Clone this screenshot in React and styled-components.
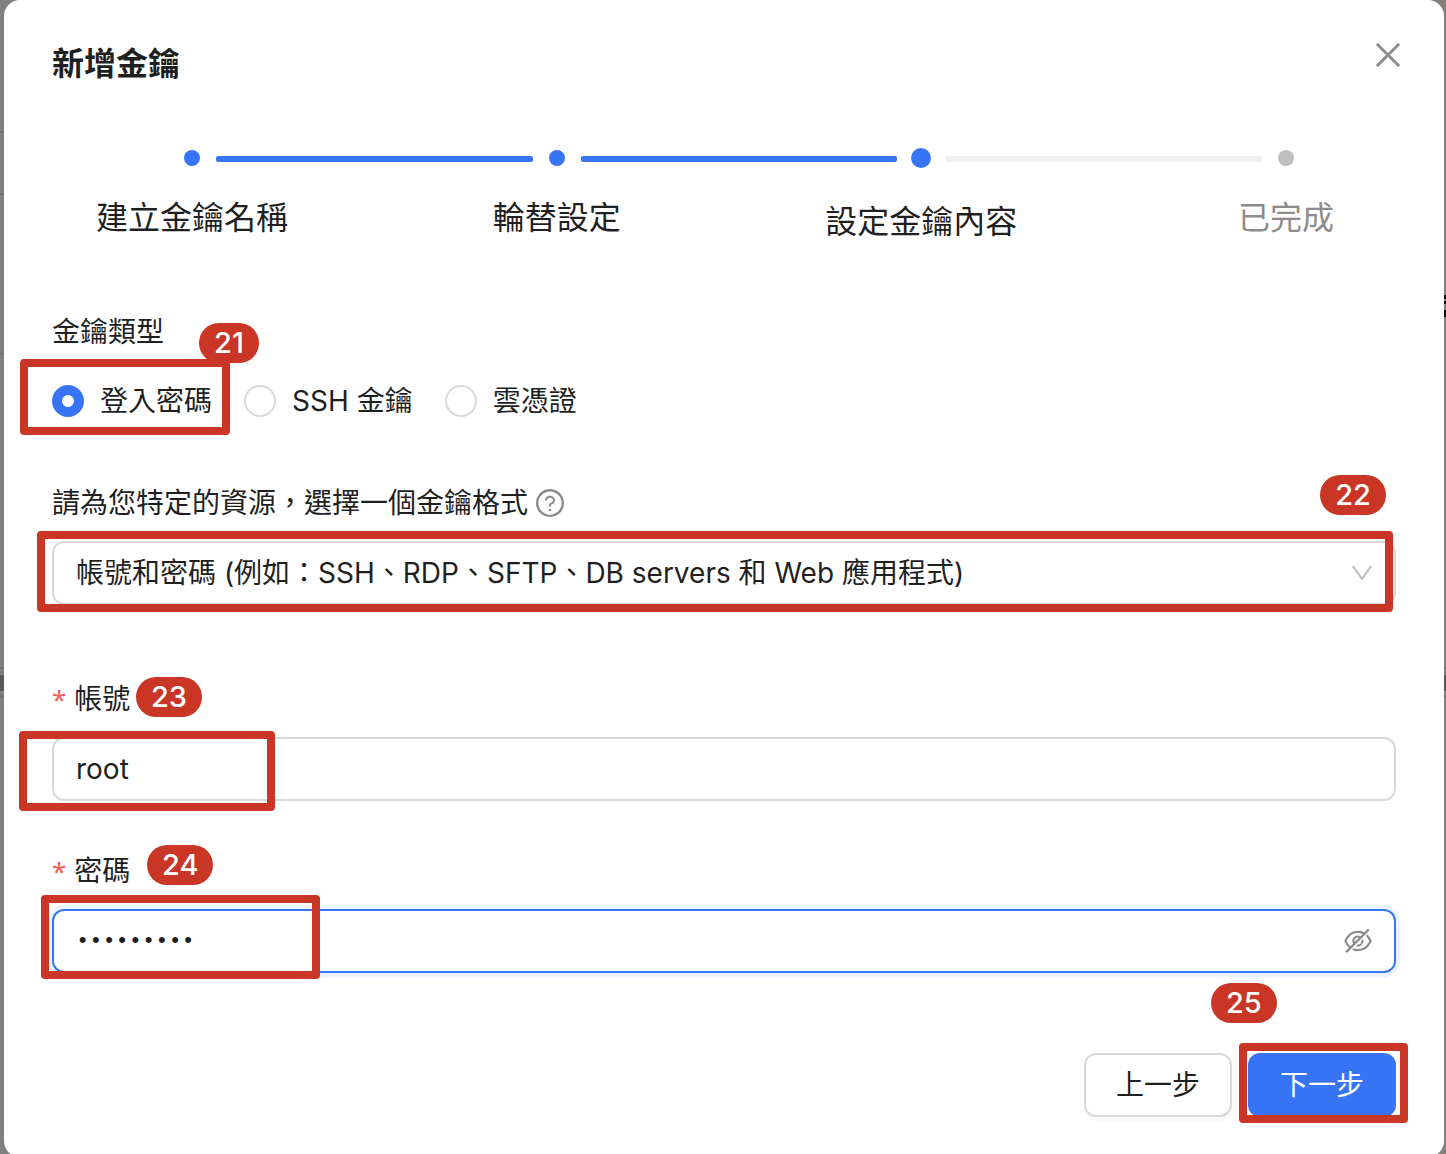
import React, { useState } from 'react'
import styled, { createGlobalStyle } from 'styled-components'
import {
  AiOutlineClose,
  AiOutlineDown,
  AiOutlineEyeInvisible,
  AiOutlineQuestionCircle
} from 'react-icons/ai'

const blue = '#3875f6'
const red = '#c93625'
const ink = '#1f1f1f'
const gray = '#8c8c8c'
const border = '#d9d9d9'
const fontStack = `Inter, 'Noto Sans CJK TC', sans-serif`

const GlobalStyle = createGlobalStyle`
  *, *::before, *::after {
    box-sizing: border-box;
  }

  body {
    margin: 0;
    color: ${ink};
    font-family: ${fontStack};
    font-size: 28px;
    line-height: 44px;
  }

  button, input, select {
    margin: 0;
    color: inherit;
    font: inherit;
  }
`

/* dimmed page, with the edges of its table rows and text still showing */
const Backdrop = styled.div`
  height: 100vh;
  padding: 0 2px 0 4px;
  overflow-y: auto;
  scrollbar-width: none;
  background:
    linear-gradient(#757472, #757472) 0 131px / 4px 2px no-repeat,
    linear-gradient(#757472, #757472) 0 193px / 4px 2px no-repeat,
    linear-gradient(#787776, #787776) 0 353px / 4px 2px no-repeat,
    linear-gradient(#757472, #757472) 0 667px / 100% 2px no-repeat,
    linear-gradient(#5a5958, #5a5958) 0 675px / 100% 16px no-repeat,
    linear-gradient(#757472, #757472) 0 695px / 100% 2px no-repeat,
    linear-gradient(#111, #111) 100% 295px / 2px 4px no-repeat,
    linear-gradient(#111, #111) 100% 301px / 2px 3px no-repeat,
    linear-gradient(#111, #111) 100% 310px / 2px 7px no-repeat,
    #82807f;
`

const Modal = styled.main`
  position: relative;
  padding: 40px 48px;
  border-radius: 16px;
  background: #fff;
`

const Title = styled.h1`
  margin: 0;
  font-size: 32px;
  font-weight: 700;
  line-height: 48px;
`

const CloseButton = styled.button`
  position: absolute;
  top: 31px;
  right: 32px;
  display: flex;
  align-items: center;
  justify-content: center;
  width: 48px;
  height: 48px;
  padding: 0;
  border: 0;
  background: none;
  color: ${gray};
  cursor: pointer;
`

const Steps = styled.ol`
  display: grid;
  grid-template-columns: 1fr 1fr 1fr 250px;
  margin: 58px 0 0;
  padding: 0;
  list-style: none;
`

const Rail = styled.div`
  display: flex;
  align-items: center;
  gap: 14px;
  height: 24px;
  margin: 0 -116px 0 130px;
`

const DotBox = styled.span`
  display: flex;
  flex: none;
  align-items: center;
  justify-content: center;
  width: 20px;
`

const Dot = styled.span`
  width: ${p => (p.$state === 'active' ? 20 : 16)}px;
  height: ${p => (p.$state === 'active' ? 20 : 16)}px;
  border-radius: 50%;
  background: ${p => (p.$state === 'wait' ? '#bfbfbf' : blue)};
`

const Tail = styled.span`
  flex: 1;
  height: 6px;
  margin-top: 2px;
  border-radius: 2px;
  background: ${p => (p.$done ? blue : '#f0f0f0')};
`

const StepName = styled.div`
  width: 280px;
  margin-top: ${p => (p.$state === 'active' ? 28 : 24)}px;
  color: ${p => (p.$state === 'wait' ? gray : ink)};
  font-size: 32px;
  line-height: 48px;
  text-align: center;
`

const Form = styled.form`
  display: flex;
  flex-direction: column;
  margin-top: 64px;
`

const RadioGroup = styled.fieldset`
  min-width: 0;
  margin: 0;
  padding: 0;
  border: 0;
`

const Legend = styled.legend`
  padding: 0;
`

const RadioRow = styled.div`
  position: relative;
  display: flex;
  gap: 32px;
  margin-top: 25px;
`

const RadioLabel = styled.label`
  display: flex;
  align-items: center;
  gap: 16px;
  cursor: pointer;
`

const Radio = styled.input`
  width: 32px;
  height: 32px;
  border: 2px solid ${border};
  border-radius: 50%;
  background: #fff;
  appearance: none;

  &:checked {
    border: 10px solid ${blue};
  }
`

const Field = styled.div`
  display: flex;
  flex-direction: column;
  gap: 16px;
  margin-top: ${p => p.$space}px;
`

const LabelRow = styled.div`
  display: flex;
  align-items: center;
  gap: 6px;
  color: ${gray};

  label {
    color: ${ink};
  }
`

const Required = styled.span`
  margin-right: 8px;
  color: #f25c57;
  font-family: 'Noto Sans', sans-serif;
  font-size: 26px;
  line-height: 1;
`

const Control = styled.div`
  position: relative;
  display: flex;
  align-items: center;
`

const Input = styled.input`
  width: 100%;
  height: 64px;
  padding: 0 22px;
  border: 2px solid ${p => (p.$active ? blue : border)};
  border-radius: 12px;
  outline: 0;
  background: #fff;
  box-shadow: ${p => (p.$active ? '0 0 0 4px #eaf3ff' : 'none')};

  &[type='password'] {
    font-family: 'Liberation Mono', monospace;
    font-size: 22px;
  }
`

const Select = styled.select`
  width: 100%;
  height: 64px;
  padding: 0 60px 0 22px;
  border: 2px solid ${border};
  border-radius: 12px;
  background: #fff;
  appearance: none;
`

const Arrow = styled(AiOutlineDown)`
  position: absolute;
  right: 20px;
  color: #bfbfbf;
  pointer-events: none;
`

const EyeButton = styled.button`
  position: absolute;
  right: 22px;
  display: flex;
  padding: 0;
  border: 0;
  background: none;
  color: ${gray};
`

const Footer = styled.footer`
  display: flex;
  justify-content: flex-end;
  gap: 16px;
  margin-top: 80px;
`

const ButtonSlot = styled.div`
  position: relative;
`

const Button = styled.button`
  height: 64px;
  padding: 0 30px;
  border: 2px solid ${p => (p.$primary ? blue : border)};
  border-radius: 12px;
  background: ${p => (p.$primary ? blue : '#fff')};
  box-shadow: ${p => (p.$primary ? 'none' : '0 4px 0 #fafafa')};
  color: ${p => (p.$primary ? '#fff' : ink)};
  cursor: pointer;
`

/* tutorial callouts: a red frame and a numbered pill laid over a control */
const Frame = styled.div`
  position: absolute;
  top: ${p => p.$top}px;
  bottom: ${p => p.$bottom}px;
  left: ${p => p.$left}px;
  right: ${p => (p.$width ? 'auto' : `${p.$right}px`)};
  width: ${p => (p.$width ? `${p.$width}px` : 'auto')};
  border: 8px solid ${red};
  border-radius: 4px;
  pointer-events: none;
`

const Badge = styled.span`
  position: absolute;
  top: ${p => p.$top}px;
  left: ${p => (p.$right === undefined ? `${p.$left}px` : 'auto')};
  right: ${p => (p.$right === undefined ? 'auto' : `${p.$right}px`)};
  min-width: 60px;
  height: 40px;
  padding: 0 15px;
  border-radius: 20px;
  background: ${red};
  color: #fff;
  font-size: 29px;
  font-weight: 500;
  line-height: 40px;
  text-align: center;
`

const steps = [
  { name: '建立金鑰名稱', state: 'done' },
  { name: '輪替設定', state: 'done' },
  { name: '設定金鑰內容', state: 'active' },
  { name: '已完成', state: 'wait' }
]

const types = [
  { id: 'password', name: '登入密碼' },
  { id: 'ssh', name: 'SSH 金鑰' },
  { id: 'cloud', name: '雲憑證' }
]

const Step = ({ name, state, last }) => (
  <li>
    <Rail>
      <DotBox><Dot $state={state} /></DotBox>
      {!last && <Tail $done={state === 'done'} />}
    </Rail>
    <StepName $state={state}>{name}</StepName>
  </li>
)

const App = () => {
  const [type, setType] = useState('password')

  return (
    <Backdrop lang='zh-Hant'>
      <GlobalStyle />
      <Modal>
        <Title>新增金鑰</Title>
        <CloseButton type='button' aria-label='關閉'>
          <AiOutlineClose size={36} />
        </CloseButton>

        <Steps>
          {steps.map((step, i) => (
            <Step key={step.name} {...step} last={i === steps.length - 1} />
          ))}
        </Steps>

        <Form onSubmit={e => e.preventDefault()}>
          <RadioGroup>
            <Legend>金鑰類型</Legend>
            <RadioRow>
              {types.map(({ id, name }) => (
                <RadioLabel key={id}>
                  <Radio
                    type='radio'
                    name='type'
                    checked={type === id}
                    onChange={() => setType(id)}
                  />
                  {name}
                </RadioLabel>
              ))}
              <Frame $top={-20} $bottom={-12} $left={-32} $width={210} />
              <Badge $top={-56} $left={147}>21</Badge>
            </RadioRow>
          </RadioGroup>

          <Field $space={58}>
            <LabelRow>
              <label htmlFor='format'>請為您特定的資源，選擇一個金鑰格式</label>
              <AiOutlineQuestionCircle size={32} />
            </LabelRow>
            <Control>
              <Select id='format'>
                <option>帳號和密碼 (例如：SSH、RDP、SFTP、DB servers 和 Web 應用程式)</option>
              </Select>
              <Arrow size={28} />
              <Frame $top={-10} $bottom={-7} $left={-15} $right={3} />
              <Badge $top={-66} $right={10}>22</Badge>
            </Control>
          </Field>

          <Field $space={72}>
            <LabelRow>
              <label htmlFor='account'><Required>*</Required>帳號</label>
            </LabelRow>
            <Control>
              <Input id='account' type='text' defaultValue='root' />
              <Frame $top={-6} $bottom={-10} $left={-33} $width={256} />
              <Badge $top={-60} $left={84}>23</Badge>
            </Control>
          </Field>

          <Field $space={48}>
            <LabelRow>
              <label htmlFor='password'><Required>*</Required>密碼</label>
            </LabelRow>
            <Control>
              <Input id='password' type='password' defaultValue='password1' $active />
              <EyeButton type='button' aria-label='顯示密碼'>
                <AiOutlineEyeInvisible size={32} />
              </EyeButton>
              <Frame $top={-14} $bottom={-6} $left={-11} $width={279} />
              <Badge $top={-64} $left={95}>24</Badge>
            </Control>
          </Field>

          <Footer>
            <Button type='button'>上一步</Button>
            <ButtonSlot>
              <Button type='submit' $primary>下一步</Button>
              <Frame $top={-10} $bottom={-6} $left={-9} $right={-12} />
              <Badge $top={-70} $left={-37}>25</Badge>
            </ButtonSlot>
          </Footer>
        </Form>
      </Modal>
    </Backdrop>
  )
}

export default App
